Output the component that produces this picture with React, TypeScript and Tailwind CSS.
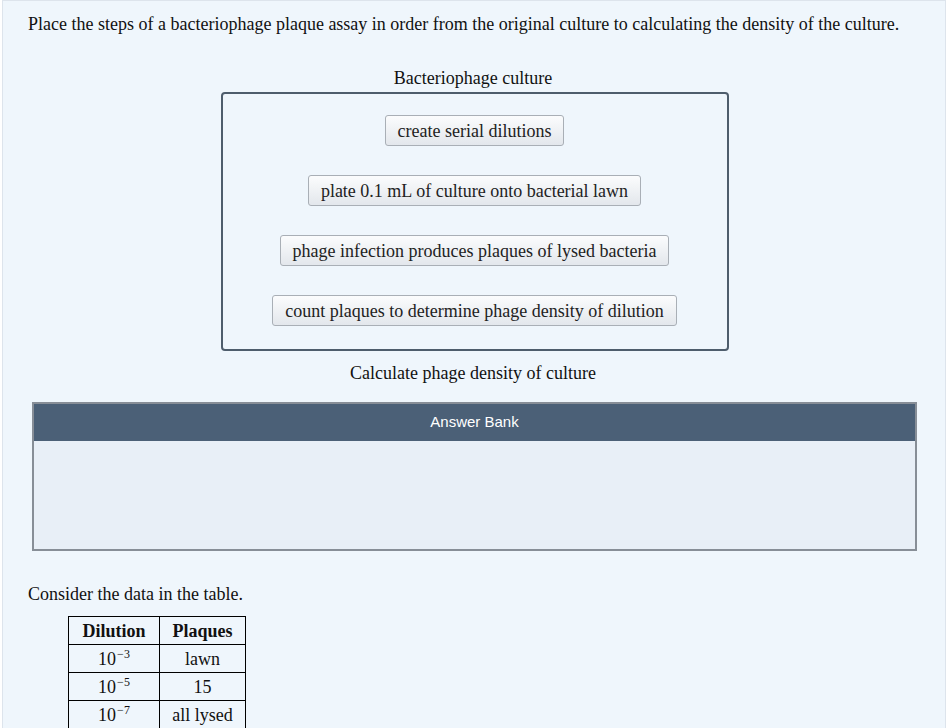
const steps = [
  "create serial dilutions",
  "plate 0.1 mL of culture onto bacterial lawn",
  "phage infection produces plaques of lysed bacteria",
  "count plaques to determine phage density of dilution",
];

const rows = [
  { exp: "3", plaques: "lawn" },
  { exp: "5", plaques: "15" },
  { exp: "7", plaques: "all lysed" },
];

function StepTile({ label }: { label: string }) {
  return (
    <div className="h-[31px] px-3 flex items-center rounded-[3px] border border-[#a9afb6] bg-gradient-to-b from-[#fbfcfd] to-[#e3e7ec] text-[18px] text-[#222] leading-none">
      {label}
    </div>
  );
}

export default function App() {
  return (
    <div
      className="min-h-[728px] bg-[#eff6fc] border-t border-l border-r border-[#dde4ec] ml-[2px] mr-[1px] text-[#111]"
      style={{ fontFamily: '"Liberation Serif", "Times New Roman", serif' }}
    >
      <p className="pt-[12px] pl-[25px] text-[18px] leading-[22px]">
        Place the steps of a bacteriophage plaque assay in order from the original culture to calculating the density of the culture.
      </p>

      <div className="flex flex-col items-center mt-[32px]">
        <div className="text-[18px] leading-[22px] ml-[-2px]">Bacteriophage culture</div>
        <div className="mt-[3px] w-[508px] h-[259px] ml-[1px] rounded-[4px] border-2 border-[#4e5d6c] flex flex-col items-center pt-[21px] gap-[29px]">
          {steps.map((s) => (
            <StepTile key={s} label={s} />
          ))}
        </div>
        <div className="mt-[11px] text-[18px] leading-[22px] ml-[-2px]">Calculate phage density of culture</div>
      </div>

      <div className="mt-[18px] ml-[29px] w-[885px] border-2 border-[#878e97] bg-[#e8eff7]">
        <div
          className="h-[37px] bg-[#4b6077] flex items-center justify-center text-white text-[15px]"
          style={{ fontFamily: '"Liberation Sans", Arial, sans-serif' }}
        >
          Answer Bank
        </div>
        <div className="h-[108px]" />
      </div>

      <p className="mt-[32px] pl-[25px] text-[18px] leading-[22px]">Consider the data in the table.</p>

      <table className="mt-[11px] ml-[65px] border-collapse text-[18px]">
        <thead>
          <tr>
            <th className="border border-black w-[91px] h-[28px] p-0 font-bold text-center leading-[20px]">Dilution</th>
            <th className="border border-black w-[86px] h-[28px] p-0 font-bold text-center leading-[20px]">Plaques</th>
          </tr>
        </thead>
        <tbody>
          {rows.map((r) => (
            <tr key={r.exp}>
              <td className="border border-black h-[28px] p-0 text-center leading-[20px]">
                10<sup className="text-[12px] relative -top-[7px] ml-[1px]">&minus;{r.exp}</sup>
              </td>
              <td className="border border-black h-[28px] p-0 text-center leading-[20px]">{r.plaques}</td>
            </tr>
          ))}
        </tbody>
      </table>
    </div>
  );
}
